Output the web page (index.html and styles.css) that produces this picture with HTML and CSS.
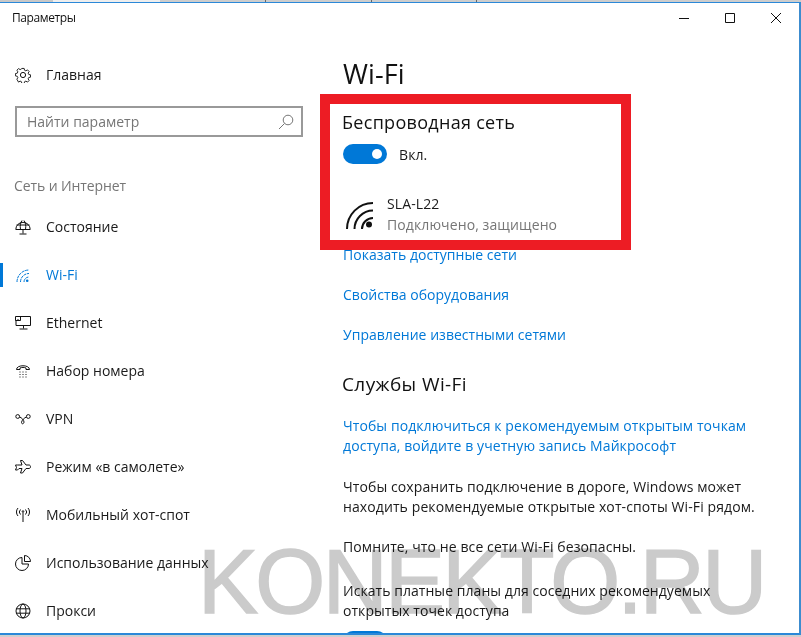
FILE: index.html
```html
<!DOCTYPE html>
<html lang="ru">
<head>
  <meta charset="UTF-8">
  <title>Параметры</title>
  <link rel="stylesheet" href="styles.css">
</head>
<body>
  <div class="desktop-strip"></div>
  <div class="window">
    <div class="titlebar">
      <span class="title">Параметры</span>
      <div class="caption-btns">
        <span class="caption-btn"><svg width="10" height="10" viewBox="0 0 10 10"><path d="M0 5.500h10" /></svg></span>
        <span class="caption-btn"><svg width="10" height="10" viewBox="0 0 10 10"><path d="M.5.5h9v9h-9z" /></svg></span>
        <span class="caption-btn"><svg width="10" height="10" viewBox="0 0 10 10"><path d="M0 0l10 10M10 0L0 10" /></svg></span>
      </div>
    </div>

    <div class="content">
      <div class="sidebar">
        <div class="nav-item home">
          <svg class="nav-icon" viewBox="0 0 16 16"><circle cx="8" cy="8" r="2.600" /><path d="M6.700.7h2.600l.4 2 1.500.7 1.800-1.100 1.800 1.800-1.100 1.800.7 1.500 2 .4v2.600l-2 .4-.7 1.500 1.100 1.800-1.800 1.800-1.800-1.100-1.500.7-.4 2H6.700l-.4-2-1.500-.7-1.800 1.100L1.200 12.700l1.100-1.800-.7-1.500-2-.4V6.400l2-.4.7-1.500L1.200 2.700 3 .9l1.800 1.100 1.500-.7z" transform="translate(.8 .8) scale(.9)" /></svg>
          <span>Главная</span>
        </div>
        <div class="search">
          <span>Найти параметр</span>
          <svg class="search-icon" viewBox="0 0 16 16"><circle cx="10" cy="6" r="4.800" /><path d="M6.500 9.500L1 15" /></svg>
        </div>
        <div class="group-label">Сеть и Интернет</div>
        <div class="nav-list">
          <div class="nav-item">
            <svg class="nav-icon" viewBox="0 0 16 16"><path d="M.8 10.500a7.200 7.200 0 1 1 14.400 0zM1.500 6h13M5.500 10.500C4.800 6.500 5.500 3.500 7 1.500M10.500 10.500C11.200 6.500 10.500 3.500 9 1.500M8 10.500v4M4.500 15h7" /></svg>
            <span>Состояние</span>
          </div>
          <div class="nav-item active">
            <svg class="nav-icon" viewBox="0 0 16 16"><path d="M2 15A12 12 0 0 1 14 3M5.500 15A8.500 8.500 0 0 1 14 6.500M9 15A5 5 0 0 1 14 10" stroke-dasharray="3 .7" /><circle class="fill" cx="12.200" cy="13.800" r="1.300" /></svg>
            <span>Wi-Fi</span>
          </div>
          <div class="nav-item">
            <svg class="nav-icon" viewBox="0 0 16 16"><path d="M4.500 1.500H15.500V10.500H1V5M8.500 10.500v3M4.500 14h8M.5 1.500h5v4h-5zM3 4v1.500" /></svg>
            <span>Ethernet</span>
          </div>
          <div class="nav-item">
            <svg class="nav-icon" viewBox="0 0 16 16"><path d="M1.500 6.500C1.500 1.500 14.500 1.500 14.500 6.500h-3.500V5c-2-.8-4-.8-6 0v1.500z" /><path d="M4.500 9h1M7.500 9h1M10.500 9h1M4.500 11.500h1M7.500 11.500h1M10.500 11.500h1M4.500 14h1M7.500 14h1M10.500 14h1" /></svg>
            <span>Набор номера</span>
          </div>
          <div class="nav-item">
            <svg class="nav-icon" viewBox="0 0 16 16"><circle cx="2.700" cy="5.500" r="1.900" /><circle cx="13.300" cy="5.500" r="1.900" /><path d="M4.500 6c2 .5 4.500 3 4.500 5s-2.500 2.500-2.500.5S9.500 6.500 11.500 6" /></svg>
            <span>VPN</span>
          </div>
          <div class="nav-item">
            <svg class="nav-icon" viewBox="0 0 16 16"><path d="M5.500 1.500h2l3.500 4.500h3c2 0 2 3.500 0 3.500h-3l-3.500 4.500h-2l1.500-4.500H4l-1.500 1.500H.5l1-2.500-1-2.500h2L4 6h3z" /></svg>
            <span>Режим «в самолете»</span>
          </div>
          <div class="nav-item">
            <svg class="nav-icon" viewBox="0 0 16 16"><path d="M8 5.500V15M5.500 7.500a3.500 3.500 0 0 1 0-5M10.500 2.500a3.500 3.500 0 0 1 0 5M3 9a6 6 0 0 1 0-8M13 1a6 6 0 0 1 0 8" /><circle cx="8" cy="4.500" r=".8" /></svg>
            <span>Мобильный хот-спот</span>
          </div>
          <div class="nav-item">
            <svg class="nav-icon" viewBox="0 0 16 16"><path d="M7 2.500a6.500 6.500 0 1 0 6.500 6.500H7zM9.500 .5a6 6 0 0 1 6 6h-6z" /></svg>
            <span>Использование данных</span>
          </div>
          <div class="nav-item">
            <svg class="nav-icon" viewBox="0 0 16 16"><circle cx="8" cy="8" r="7" /><ellipse cx="8" cy="8" rx="3" ry="7" /><path d="M1 5.800h14M1 10.200h14" /></svg>
            <span>Прокси</span>
          </div>
        </div>
      </div>

      <div class="main">
        <h1>Wi-Fi</h1>
        <h2 class="wireless-title">Беспроводная сеть</h2>
        <div class="toggle-row">
          <span class="toggle"></span>
          <span class="toggle-text">Вкл.</span>
        </div>
        <div class="network">
          <svg class="network-icon" viewBox="0 0 30 30"><path d="M2 28A26 26 0 0 1 28 2M9.500 28A18.500 18.500 0 0 1 28 9.500M17 28A11 11 0 0 1 28 17" /><circle class="fill" cx="24" cy="23.500" r="3" /></svg>
          <div>
            <div>SLA-L22</div>
            <div class="network-status">Подключено, защищено</div>
          </div>
        </div>
        <a class="link first-link">Показать доступные сети</a>
        <a class="link">Свойства оборудования</a>
        <a class="link">Управление известными сетями</a>
        <h2 class="services-title">Службы Wi-Fi</h2>
        <a class="link para-link">Чтобы подключиться к рекомендуемым открытым точкам<br>доступа, войдите в учетную запись Майкрософт</a>
        <p class="para-a">Чтобы сохранить подключение в дороге, Windows может<br>находить рекомендуемые открытые хот-споты Wi-Fi рядом.</p>
        <p class="para-b">Помните, что не все сети Wi-Fi безопасны.</p>
        <p class="para-c">Искать платные планы для соседних рекомендуемых<br>открытых точек доступа</p>
        <span class="toggle toggle-cut"></span>
      </div>
    </div>

    <!-- annotation and watermark added on top of the screenshot -->
    <div class="red-box"></div>
    <div class="watermark">KONEKTO.RU</div>
  </div>
</body>
</html>
```

FILE: styles.css
```css
html, body {
  height: 100%;
}
body {
  margin: 0;
  background-color: #cfcfcf;
  font-family: "Open Sans", sans-serif;
  font-size: 14px;
  line-height: 20px;
  color: #1a1a1a;
  overflow: hidden;
}
.desktop-strip {
  height: 2px;
  background: linear-gradient(to right, #c8c8c8 53px, #eeeeee 53px, #eeeeee 160px, #cdcdcd 160px, #cdcdcd 265px, #666 265px, #666 266px, #cdcdcd 266px, #cdcdcd 371px, #666 371px, #666 372px, #cdcdcd 372px, #cdcdcd 476px, #666 476px, #666 477px, #cdcdcd 477px);
}
.window {
  position: relative;
  box-sizing: border-box;
  width: 801px;
  height: 633px;
  background-color: #fff;
  border-top: 1px solid #2b88d8;
  border-right: 2px solid #3c8ccf;
  border-bottom: 2px solid #2b88d8;
  overflow: hidden;
}
.titlebar {
  display: flex;
  justify-content: space-between;
  height: 30px;
}
.title {
  padding-left: 12px;
  font-size: 12px;
  letter-spacing: -.4px;
  line-height: 30px;
  color: #111;
}
.caption-btns {
  display: flex;
}
.caption-btn {
  display: flex;
  align-items: center;
  justify-content: center;
  width: 46px;
  height: 30px;
}
.caption-btn svg {
  fill: none;
  stroke: #111;
  stroke-width: 1;
}
.content {
  display: flex;
}
.sidebar {
  flex: none;
  width: 320px;
  padding-top: 18px;
}
.nav-item {
  display: flex;
  align-items: center;
  gap: 15px;
  height: 48px;
  padding-left: 15px;
}
.nav-icon {
  flex: none;
  width: 16px;
  height: 16px;
  fill: none;
  stroke: #111;
  stroke-width: 1;
}
.nav-icon .fill {
  fill: #0078d7;
  stroke: none;
}
.nav-item.active {
  color: #0078d7;
}
.nav-item.active .nav-icon {
  stroke: #0078d7;
}
.nav-item.active::before {
  content: "";
  position: absolute;
  left: 0;
  width: 3px;
  height: 24px;
  background-color: #0078d7;
}
.search {
  display: flex;
  align-items: center;
  justify-content: space-between;
  box-sizing: border-box;
  width: 288px;
  height: 31px;
  margin: 7px 0 0 15px;
  padding: 0 7px 0 10px;
  border: 2px solid #999;
  color: #767676;
}
.search-icon {
  width: 16px;
  height: 16px;
  fill: none;
  stroke: #767676;
}
.group-label {
  margin: 39px 0 7px 14px;
  letter-spacing: -.1px;
  color: #767676;
}
.nav-list {
  display: flex;
  flex-direction: column;
}
.main {
  flex: 1;
  padding: 21px 0 0 23px;
  letter-spacing: .1px;
}
h1 {
  margin: 0;
  font-size: 27px;
  font-weight: 400;
  line-height: 40px;
  color: #111;
}
h2 {
  margin: 0;
  font-size: 18px;
  font-weight: 400;
  line-height: 28px;
  color: #111;
}
.wireless-title {
  margin: 14px 0 0 -1px;
  letter-spacing: .3px;
}
.toggle-row {
  display: flex;
  align-items: center;
  gap: 12px;
  margin-top: 8px;
}
.toggle-text {
  position: relative;
  top: 1px;
}
.toggle {
  position: relative;
  display: block;
  width: 44px;
  height: 20px;
  border-radius: 10px;
  background-color: #0078d7;
}
.toggle::after {
  content: "";
  position: absolute;
  top: 5px;
  right: 5px;
  width: 10px;
  height: 10px;
  border-radius: 50%;
  background-color: #fff;
}
.network {
  display: flex;
  align-items: center;
  gap: 12px;
  margin-top: 30px;
  padding-left: 2px;
}
.network-icon {
  width: 30px;
  height: 30px;
  margin-top: 3px;
  fill: none;
  stroke: #111;
  stroke-width: 2;
}
.network-icon .fill {
  fill: #111;
  stroke: none;
}
.network-status {
  margin-top: 1px;
  color: #767676;
}
.link {
  display: block;
  margin-top: 20px;
  letter-spacing: .03px;
  color: #0078d7;
}
.first-link {
  margin-top: 10px;
}
.services-title {
  margin: 25px 0 0 -1px;
  font-size: 19px;
  letter-spacing: .4px;
}
.para-link {
  margin-top: 18px;
  letter-spacing: .08px;
}
p {
  margin: 0;
}
.para-a {
  margin-top: 21px;
}
.para-b {
  margin-top: 20px;
}
.para-c {
  margin-top: 24px;
  letter-spacing: .05px;
}
.toggle-cut {
  margin-top: 10px;
}
.red-box {
  position: absolute;
  left: 320px;
  top: 91px;
  box-sizing: border-box;
  width: 311px;
  height: 156px;
  border: 10px solid #ed1c24;
}
.watermark {
  position: absolute;
  left: 198px;
  top: 534px;
  font-family: "Liberation Sans", sans-serif;
  font-size: 90px;
  line-height: 90px;
  letter-spacing: -2.700px;
  color: #cbcbcb;
  -webkit-text-stroke: 1.500px #cbcbcb;
  filter: blur(.6px);
  mix-blend-mode: multiply;
  white-space: nowrap;
}
```
